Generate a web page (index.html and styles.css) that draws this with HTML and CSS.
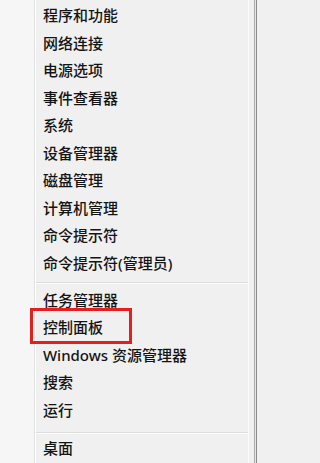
FILE: index.html
```html
<!DOCTYPE html>
<html lang="zh-CN">
<head>
<meta charset="utf-8">
<title>菜单</title>
<link rel="stylesheet" href="styles.css">
</head>
<body>
<div class="menu">
  <ul class="group group-first">
    <li class="item">程序和功能</li>
    <li class="item">网络连接</li>
    <li class="item">电源选项</li>
    <li class="item">事件查看器</li>
    <li class="item">系统</li>
    <li class="item">设备管理器</li>
    <li class="item">磁盘管理</li>
    <li class="item">计算机管理</li>
    <li class="item">命令提示符</li>
    <li class="item">命令提示符(管理员)</li>
  </ul>
  <div class="sep sep-a"></div>
  <ul class="group">
    <li class="item">任务管理器</li>
    <li class="item item-marked">控制面板<span class="mark"></span></li>
    <li class="item">Windows 资源管理器</li>
    <li class="item">搜索</li>
    <li class="item">运行</li>
  </ul>
  <div class="sep sep-b"></div>
  <ul class="group">
    <li class="item">桌面</li>
  </ul>
</div>
</body>
</html>
```
FILE: styles.css
```css
html, body {
  margin: 0;
  padding: 0;
  background: #f0f0f0;
}
.menu {
  width: 257px;
  height: 463px;
  box-sizing: border-box;
  overflow: hidden;
  padding-top: 2px;
  font-family: "Noto Sans", "Noto Sans CJK SC", sans-serif;
  font-size: 15px;
  font-weight: 500;
  color: #141414;
  background:
    linear-gradient(to right,
      #f6f6f6 0, #f6f6f6 34px,
      #e2e3e3 34px, #e2e3e3 35px,
      #ffffff 35px, #ffffff 36px,
      #f0f0f0 36px, #f0f0f0 248px,
      #fbfbfb 248px, #fbfbfb 249px,
      #f0f0f0 249px, #f0f0f0 254px,
      #a9a9a9 254px, #a9a9a9 255px,
      #e6e6e6 255px, #e6e6e6 256px,
      #8a8a8a 256px, #8a8a8a 257px);
}
.group {
  list-style: none;
  margin: 0;
  padding: 0;
}
.item {
  height: 27.5px;
  line-height: 27.5px;
  padding-left: 43px;
  white-space: nowrap;
}
.item-marked {
  position: relative;
}
.mark {
  position: absolute;
  left: 30px;
  top: -6px;
  width: 102px;
  height: 36px;
  box-sizing: border-box;
  border: 3px solid #e3201f;
}
.sep {
  margin-left: 36px;
  margin-right: 9px;
  height: 1px;
  background: #dddddd;
  border-bottom: 1px solid #fcfcfc;
}
.sep-a {
  margin-top: 5px;
  margin-bottom: 2.5px;
}
.sep-b {
  margin-top: 7.5px;
  margin-bottom: 1px;
}
```
